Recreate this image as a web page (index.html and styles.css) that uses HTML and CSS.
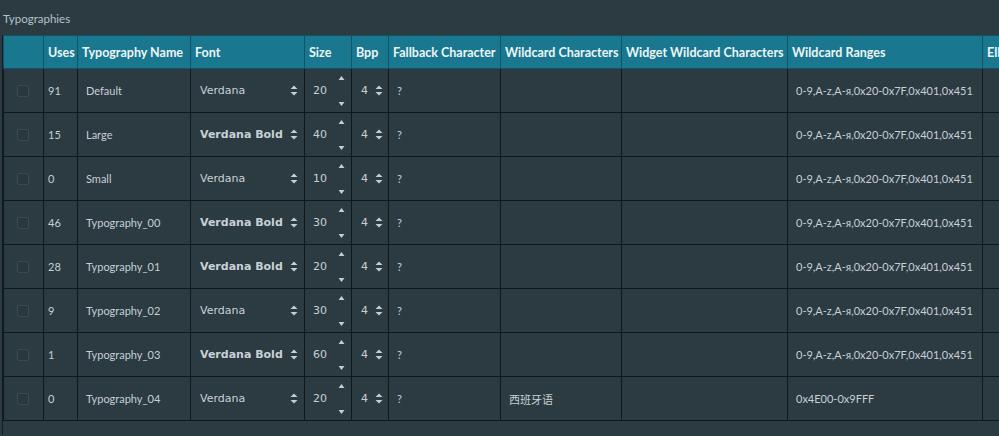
FILE: index.html
```html
<!DOCTYPE html>
<html>
<head>
<meta charset="utf-8">
<link rel="stylesheet" href="styles.css">
</head>
<body>
<div class="page">
  <div class="title">Typographies</div>
  <div class="grid-wrap">
    <table class="grid">
      <colgroup>
        <col class="c-check"><col class="c-uses"><col class="c-name"><col class="c-font"><col class="c-size"><col class="c-bpp"><col class="c-fall"><col class="c-wild"><col class="c-widget"><col class="c-ranges"><col class="c-ell">
      </colgroup>
      <thead>
        <tr>
          <th></th><th>Uses</th><th>Typography Name</th><th>Font</th><th>Size</th><th>Bpp</th><th>Fallback Character</th><th>Wildcard Characters</th><th>Widget Wildcard Characters</th><th>Wildcard Ranges</th><th>Ellipsis Character</th>
        </tr>
      </thead>
      <tbody id="rows"></tbody>
    </table>
  </div>
</div>
<script src="app.js"></script>
</body>
</html>
```
FILE: styles.css
```css
html, body {
  margin: 0;
  padding: 0;
  background: #2c3a42;
  overflow: hidden;
}
.page {
  width: 999px;
  height: 436px;
  overflow: hidden;
  font-family: Lato, "Open Sans", sans-serif;
}
.title {
  padding: 12px 0 0 3px;
  height: 24px;
  box-sizing: border-box;
  font-size: 11.5px;
  color: #b4c2cc;
}
.grid-wrap {
  margin: 11px 0 0 2px;
  border-left: 1px solid #141c20;
  height: 400px;
}
.grid {
  border-collapse: collapse;
  table-layout: fixed;
  width: 1100px;
}
.c-check { width: 40px; }
.c-uses { width: 34px; }
.c-name { width: 113px; }
.c-font { width: 114px; }
.c-size { width: 47px; }
.c-bpp { width: 37px; }
.c-fall { width: 112px; }
.c-wild { width: 121px; }
.c-widget { width: 166px; }
.c-ranges { width: 195px; }
.c-ell { width: 121px; }

.grid th {
  background: #19788f;
  color: #eef5f7;
  font-weight: 700;
  font-size: 12.5px;
  text-align: left;
  height: 32px;
  padding: 0 0 0 4px;
  border: 1px solid #0f5566;
  white-space: nowrap;
  overflow: hidden;
}
.grid td {
  height: 43px;
  padding: 0 0 0 4px;
  border: 1px solid #11181c;
  color: #c6d0d5;
  font-size: 11px;
  white-space: nowrap;
  overflow: hidden;
  vertical-align: middle;
}
.grid td.pad { padding-left: 8px; }
.check {
  display: block;
  width: 10px;
  height: 10px;
  margin-left: 9px;
  border: 1px solid #3a4a53;
  border-radius: 2px;
  background: #2a363d;
}
.select {
  display: flex;
  align-items: center;
  justify-content: space-between;
  padding: 0 6px 0 5px;
  font-family: "DejaVu Sans", Verdana, sans-serif;
  font-size: 11px;
  color: #c8d1d6;
}
.select.bold { font-weight: 700; }
.bpp {
  display: flex;
  align-items: center;
  gap: 7px;
  padding-left: 5px;
  font-family: "DejaVu Sans", Verdana, sans-serif;
  font-size: 11px;
}
.spin {
  display: flex;
  align-items: center;
  justify-content: space-between;
  height: 43px;
  padding: 0 6px 0 4px;
  font-family: "DejaVu Sans", Verdana, sans-serif;
  font-size: 11px;
}
.spin-arrows {
  display: flex;
  flex-direction: column;
  justify-content: space-between;
  height: 30px;
}
.arrow { display: block; }
.cjk { font-family: "Noto Sans CJK SC", sans-serif; font-size: 11px; }
```
FILE: app.js
```js
const data = [
  [91, "Default", "Verdana", false, 20, "0-9,A-z,А-я,0x20-0x7F,0x401,0x451", ""],
  [15, "Large", "Verdana Bold", true, 40, "0-9,A-z,А-я,0x20-0x7F,0x401,0x451", ""],
  [0, "Small", "Verdana", false, 10, "0-9,A-z,А-я,0x20-0x7F,0x401,0x451", ""],
  [46, "Typography_00", "Verdana Bold", true, 30, "0-9,A-z,А-я,0x20-0x7F,0x401,0x451", ""],
  [28, "Typography_01", "Verdana Bold", true, 20, "0-9,A-z,А-я,0x20-0x7F,0x401,0x451", ""],
  [9, "Typography_02", "Verdana", false, 30, "0-9,A-z,А-я,0x20-0x7F,0x401,0x451", ""],
  [1, "Typography_03", "Verdana Bold", true, 60, "0-9,A-z,А-я,0x20-0x7F,0x401,0x451", ""],
  [0, "Typography_04", "Verdana", false, 20, "0x4E00-0x9FFF", "西班牙语"]
];
const updown = '<svg class="arrow" width="8" height="11" viewBox="0 0 8 11"><path d="M4 0.5 L7.5 4 L0.5 4 Z M0.5 7 L7.5 7 L4 10.5 Z" fill="#c3cdd2"/></svg>';
const up = '<svg class="arrow" width="7" height="4" viewBox="0 0 7 4"><path d="M3.5 0 L6.5 4 L0.5 4 Z" fill="#c3cdd2"/></svg>';
const down = '<svg class="arrow" width="7" height="4" viewBox="0 0 7 4"><path d="M0.5 0 L6.5 0 L3.5 4 Z" fill="#c3cdd2"/></svg>';
const tb = document.getElementById("rows");
tb.innerHTML = data.map(r => `
<tr>
  <td><span class="check"></span></td>
  <td>${r[0]}</td>
  <td class="pad">${r[1]}</td>
  <td><div class="select${r[3] ? " bold" : ""}"><span>${r[2]}</span>${updown}</div></td>
  <td><div class="spin"><span>${r[4]}</span><span class="spin-arrows">${up}${down}</span></div></td>
  <td><div class="bpp"><span>4</span>${updown}</div></td>
  <td class="pad">?</td>
  <td class="pad cjk">${r[6]}</td>
  <td></td>
  <td class="pad">${r[5]}</td>
  <td></td>
</tr>`).join("");
```
